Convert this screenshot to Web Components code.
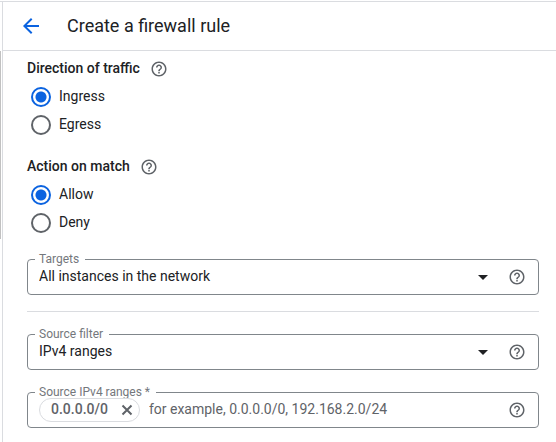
<!DOCTYPE html>
<html lang="en">
<head>
<meta charset="utf-8">
<meta name="viewport" content="width=device-width, initial-scale=1">
<title>Create a firewall rule</title>
<style>
  body { margin: 0; background: #fff; color: #202124; font: 14px/20px Roboto, "Liberation Sans", sans-serif; }
</style>
</head>
<body>
<rule-page>
  <page-header slot="header">Create a firewall rule</page-header>
  <radio-group label="Direction of traffic" name="direction" options="Ingress,Egress"></radio-group>
  <radio-group label="Action on match" name="action" options="Allow,Deny"></radio-group>
  <select-field label="Targets" options="All instances in the network,Specified target tags,Specified service account"></select-field>
  <section-divider></section-divider>
  <select-field label="Source filter" options="IPv4 ranges,IPv6 ranges,Source tags,Service account"></select-field>
  <chip-field label="Source IPv4 ranges *" placeholder="for example, 0.0.0.0/0, 192.168.2.0/24"><value-chip>0.0.0.0/0</value-chip></chip-field>
</rule-page>

<script>
const attach = (host, html) => {
  host.attachShadow({ mode: "open" }).innerHTML = html;
  return host.shadowRoot;
};

const fieldStyles = `
  :host { display: block; }
  fieldset { margin: 0; padding: 0 12px 7px 11px; min-width: 0; border: 1px solid #80868b; border-radius: 4px; }
  legend { margin-left: -4px; padding: 0 6px 0 4px; height: 15px; font-size: 12px; line-height: 15px; color: #74777c; }
  .row { height: 20px; display: flex; align-items: center; gap: 13px; }
  select, input { box-sizing: border-box; height: 20px; margin: 0; border: 0; background: none; color: inherit; font: inherit; line-height: 18px; }
`;

customElements.define("rule-page", class extends HTMLElement {
  constructor() {
    super();
    attach(this, `
      <style>
        :host { display: grid; grid-template-columns: 2px 1fr; min-height: 100vh; box-sizing: border-box; padding-top: 1px; }
        .rail { border-top: 1px solid #dadce0; padding-top: 49px; }
        .thumb { width: 1px; height: 188px; background: #c1c1c1; }
        .panel { border: solid #dadce0; border-width: 1px 0 0 1px; min-width: 0; }
        main { display: flex; flex-direction: column; padding: 8px 17px 14px 24px; }
        ::slotted(radio-group) { margin-bottom: 18px; }
        ::slotted(radio-group[name="action"]) { margin-bottom: 15px; }
        ::slotted(select-field) { margin-bottom: 15px; }
      </style>
      <div class="rail"><div class="thumb"></div></div>
      <div class="panel">
        <slot name="header"></slot>
        <main><slot></slot></main>
      </div>`);
  }
});

customElements.define("page-header", class extends HTMLElement {
  constructor() {
    super();
    attach(this, `
      <style>
        :host { display: block; }
        header { display: flex; align-items: center; gap: 24px; height: 48px; padding: 0 16px; border-bottom: 1px solid #dadce0; }
        button { display: flex; padding: 0; border: 0; background: none; cursor: pointer; }
        h1 { margin: 0; font-size: 18px; line-height: 24px; font-weight: 400; }
      </style>
      <header>
        <button type="button" aria-label="Back">
          <svg width="24" height="24" viewBox="0 0 24 24" fill="#0b63e0" aria-hidden="true"><path d="M20 11H7.8l5.6-5.6L12 4l-8 8 8 8 1.4-1.4L7.8 13H20z"/></svg>
        </button>
        <h1><slot></slot></h1>
      </header>`);
  }
});

customElements.define("help-button", class extends HTMLElement {
  constructor() {
    super();
    attach(this, `
      <style>
        :host { display: block; flex: none; }
        button { display: flex; padding: 0; border: 0; background: none; cursor: pointer; }
      </style>
      <button type="button" aria-label="Help">
        <svg width="18" height="18" viewBox="0 0 24 24" fill="#5f6368" aria-hidden="true"><path d="M11 18h2v-2h-2v2zm1-16C6.480 2 2 6.480 2 12s4.480 10 10 10 10-4.480 10-10S17.520 2 12 2zm0 18c-4.410 0-8-3.590-8-8s3.590-8 8-8 8 3.590 8 8-3.590 8-8 8zm0-14c-2.210 0-4 1.790-4 4h2c0-1.100.9-2 2-2s2 .9 2 2c0 2-3 1.750-3 5h2c0-2.250 3-2.500 3-5 0-2.210-1.790-4-4-4z"/></svg>
      </button>`);
  }
});

customElements.define("radio-group", class extends HTMLElement {
  connectedCallback() {
    if (this.shadowRoot) return;
    const name = this.getAttribute("name");
    const rows = this.getAttribute("options").split(",").map((text, i) =>
      `<label><input type="radio" name="${name}" ${i === 0 ? "checked" : ""}><span>${text}</span></label>`).join("");
    attach(this, `
      <style>
        :host { display: block; }
        .head { display: flex; align-items: center; gap: 10px; height: 20px; margin-bottom: 4px; }
        h2, span { margin: 0; padding-bottom: 2px; font-size: 14px; line-height: 18px; }
        h2 { font-weight: 500; }
        label { display: flex; align-items: center; gap: 8px; width: max-content; height: 28px; padding-left: 4px; }
        input { appearance: none; flex: none; width: 20px; height: 20px; margin: 0; border: 2px solid #5f6368; border-radius: 50%; }
        input:checked { border-color: #0b63e0; background: radial-gradient(circle, #0b63e0 5px, #fff 6px); }
      </style>
      <div class="head"><h2 id="title">${this.getAttribute("label")}</h2><help-button></help-button></div>
      <div role="radiogroup" aria-labelledby="title">${rows}</div>`);
  }
});

customElements.define("select-field", class extends HTMLElement {
  connectedCallback() {
    if (this.shadowRoot) return;
    const options = this.getAttribute("options").split(",").map(text => `<option>${text}</option>`).join("");
    attach(this, `
      <style>${fieldStyles}
        .control { flex: 1; display: grid; grid-template-columns: 1fr 24px; align-items: center; }
        select { grid-area: 1 / 1 / 2 / 3; appearance: none; width: 100%; padding: 0 24px 2px 0; }
        svg { grid-area: 1 / 2; pointer-events: none; }
      </style>
      <fieldset>
        <legend><label for="value">${this.getAttribute("label")}</label></legend>
        <div class="row">
          <div class="control">
            <select id="value">${options}</select>
            <svg width="24" height="24" viewBox="0 0 24 24" fill="#202124" aria-hidden="true"><path d="M7 10l5 5 5-5z"/></svg>
          </div>
          <help-button></help-button>
        </div>
      </fieldset>`);
  }
});

customElements.define("value-chip", class extends HTMLElement {
  constructor() {
    super();
    attach(this, `
      <style>
        :host { display: flex; align-items: center; gap: 10px; flex: none; box-sizing: border-box; height: 24px; padding: 0 3px 0 11px; border: 1px solid #dadce0; border-radius: 12px; color: #5f6368; font-weight: 500; }
        span { padding-bottom: 2px; line-height: 18px; }
        button { display: flex; padding: 0; border: 0; background: none; cursor: pointer; }
      </style>
      <span><slot></slot></span>
      <button type="button" aria-label="Remove">
        <svg width="18" height="18" viewBox="0 0 18 18" fill="none" stroke="#5f6368" stroke-width="2" aria-hidden="true"><path d="M4.500 4.500l9 9M13.500 4.500l-9 9"/></svg>
      </button>`);
  }
});

customElements.define("chip-field", class extends HTMLElement {
  connectedCallback() {
    if (this.shadowRoot) return;
    attach(this, `
      <style>${fieldStyles}
        input { flex: 1; min-width: 0; padding: 0 0 2px; outline: 0; }
        input::placeholder { color: #5f6368; opacity: 1; }
        .entry { flex: 1; min-width: 0; display: flex; align-items: center; gap: 9px; }
      </style>
      <fieldset>
        <legend><label for="value">${this.getAttribute("label")}</label></legend>
        <div class="row">
          <div class="entry"><slot></slot><input id="value" type="text" placeholder="${this.getAttribute("placeholder")}"></div>
          <help-button></help-button>
        </div>
      </fieldset>`);
  }
});

customElements.define("section-divider", class extends HTMLElement {
  constructor() {
    super();
    attach(this, `
      <style>
        :host { display: block; margin: 1px 0 15px; }
        hr { margin: 0; border: 0; border-top: 1px solid #dadce0; }
      </style>
      <hr>`);
  }
});
</script>
</body>
</html>
